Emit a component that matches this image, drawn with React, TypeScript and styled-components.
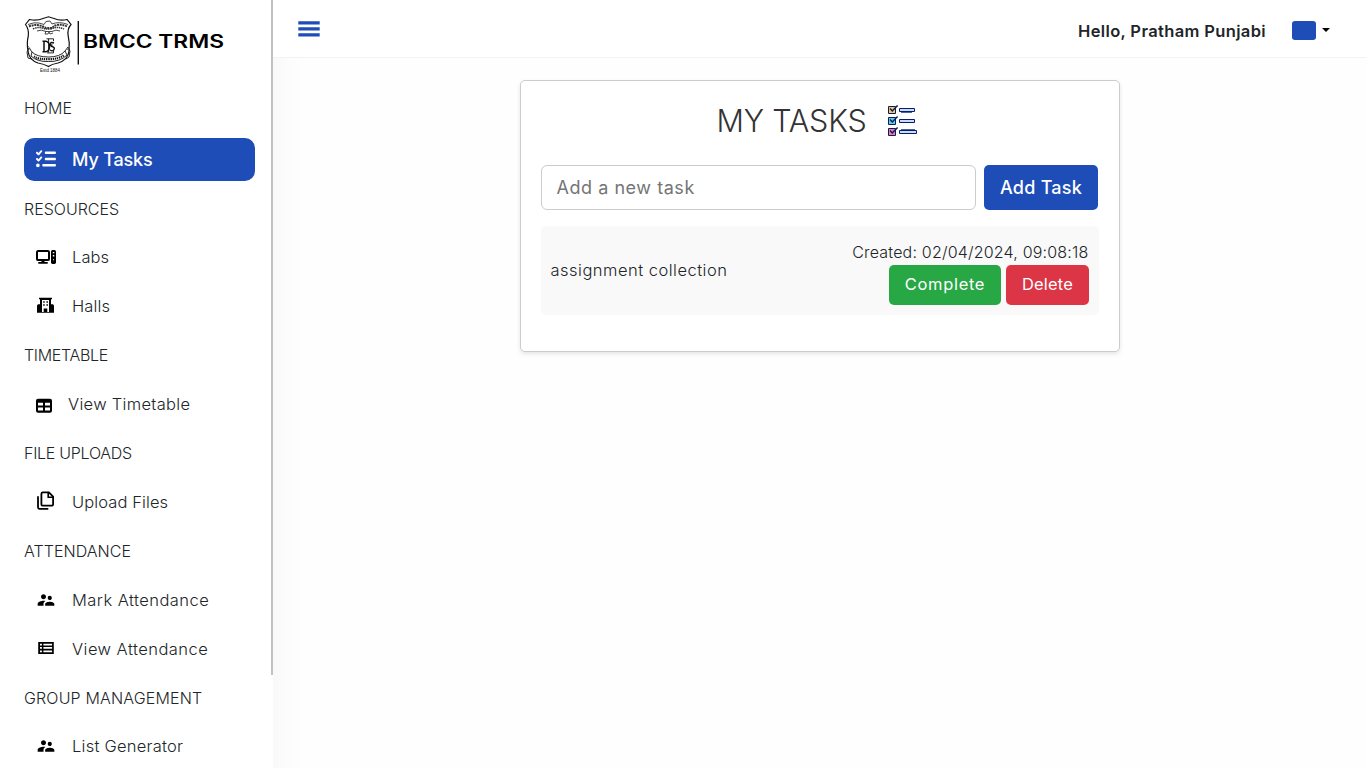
import React from 'react';
import styled, { createGlobalStyle } from 'styled-components';
import { MdSupervisorAccount } from 'react-icons/md';
import { FaListCheck } from 'react-icons/fa6';

const GlobalStyle = createGlobalStyle`
  *, *::before, *::after { box-sizing: border-box; }
  body {
    margin: 0;
    overflow: hidden;
    background: #fefefe;
    color: #212529;
    font: 300 16px/24px Inter, "Liberation Sans", sans-serif;
  }
`;

const BLUE = '#1e4db7';

const Page = styled.div`
  display: flex;
  height: 768px;
`;

const Sidebar = styled.aside`
  display: flex;
  flex: 0 0 273px;
  height: 768px;
  overflow: hidden;
  background: #fff;
`;

const SidebarContent = styled.div`
  flex: 1;
  min-width: 0;
`;

const ScrollThumb = styled.div`
  width: 2px;
  height: 675px;
  background: #c1c1c1;
`;

const Brand = styled.div`
  height: 86px;
  padding: 14px 0 0 22px;
`;

const Nav = styled.nav`
  display: grid;
  grid-auto-rows: 48.92px;
  align-items: center;
`;

const Heading = styled.div<{ $spacing: number; $lift?: number }>`
  padding: 1px 0 ${(p) => p.$lift ?? 0}px 24px;
  letter-spacing: ${(p) => p.$spacing}px;
  white-space: nowrap;
`;

const Item = styled.a<{ $spacing: number; $active?: boolean }>`
  display: flex;
  align-items: center;
  gap: 16px;
  height: 43px;
  margin: 0 16px 0 24px;
  padding-left: 12px;
  border-radius: 10px;
  background: ${(p) => (p.$active ? BLUE : 'transparent')};
  color: ${(p) => (p.$active ? '#fff' : '#212529')};
  font-size: ${(p) => (p.$active ? 18 : 16.5)}px;
  font-weight: ${(p) => (p.$active ? 500 : 300)};
  letter-spacing: ${(p) => p.$spacing}px;
  white-space: nowrap;
`;

const ItemLabel = styled.span`
  padding-top: 0.4px;
`;

const IconSlot = styled.span<{ $active?: boolean }>`
  display: flex;
  color: ${(p) => (p.$active ? '#fff' : '#000')};
  svg { display: block; }
`;

const Main = styled.main`
  display: flex;
  flex: 1;
  flex-direction: column;
  min-width: 0;
`;

const Header = styled.header`
  display: flex;
  align-items: center;
  height: 58px;
  padding: 0 36px 0 25px;
  border-bottom: 1px solid #f3f3f3;
  background: #fff;
`;

const MenuButton = styled.button`
  display: flex;
  margin-right: auto;
  padding: 1px 0 0;
  border: 0;
  background: none;
`;

const Greeting = styled.span`
  margin: 4px 26px 0 0;
  font-size: 16.5px;
  font-weight: 600;
  letter-spacing: 0.36px;
`;

const Avatar = styled.span`
  width: 24px;
  height: 19px;
  margin: 3px 6px 0 0;
  border-radius: 3px;
  background: ${BLUE};
`;

const Caret = styled.span`
  margin-top: 3px;
  border: 4px solid transparent;
  border-top-color: #000;
  border-bottom: 0;
`;

const Content = styled.div`
  display: flex;
  flex: 1;
  align-items: flex-start;
  justify-content: center;
  padding-top: 22px;
  background: linear-gradient(to right, #f9f9f9, #fcfcfc 15px, #fefefe 32px);
`;

const Card = styled.section`
  width: 600px;
  height: 272px;
  padding: 20px;
  border: 1px solid #ccc;
  border-radius: 5px;
  background: #fff;
  box-shadow: 0 2px 4px rgba(0, 0, 0, 0.1);
`;

const Title = styled.h1`
  display: flex;
  align-items: center;
  justify-content: center;
  gap: 21px;
  height: 40px;
  margin: 0 0 24px;
  padding: 0 5px 1px 0;
  color: #333;
  font-size: 30.5px;
  font-weight: 300;
  line-height: 40px;
  letter-spacing: -0.2px;
  white-space: nowrap;
`;

const TitleText = styled.span`
  padding-top: 1px;
`;

const TaskForm = styled.div`
  display: flex;
  gap: 8px;
  height: 45px;
  margin-right: 1px;
`;

const TaskInput = styled.input`
  flex: 1;
  min-width: 0;
  padding: 0 15px;
  border: 1px solid #ccc;
  border-radius: 6px;
  background: #fff;
  font: 400 18px Inter, "Liberation Sans", sans-serif;
  letter-spacing: 0.54px;
  &::placeholder { color: #757575; opacity: 1; }
`;

const Button = styled.button<{ $bg: string; $width: number; $large?: boolean; $spacing: number }>`
  width: ${(p) => p.$width}px;
  height: ${(p) => (p.$large ? 45 : 40)}px;
  padding: 0 0 ${(p) => (p.$large ? 0 : 2)}px 1px;
  border: 0;
  border-radius: 5px;
  background: ${(p) => p.$bg};
  color: #fff;
  font: ${(p) => (p.$large ? '500 18px' : '400 16.5px')} Inter, "Liberation Sans", sans-serif;
  letter-spacing: ${(p) => p.$spacing}px;
  white-space: nowrap;
`;

const TaskRow = styled.div`
  display: flex;
  align-items: center;
  justify-content: space-between;
  height: 89px;
  margin-top: 16px;
  padding: 10px;
  border-radius: 5px;
  background: #f9f9f9;
`;

const TaskName = styled.span`
  padding-bottom: 2px;
  font-size: 16.5px;
  letter-spacing: 0.49px;
`;

const TaskMeta = styled.div`
  display: flex;
  flex-direction: column;
  align-items: flex-end;
  padding-top: 4px;
  letter-spacing: 0.19px;
`;

const Actions = styled.div`
  display: flex;
  gap: 5px;
  margin-top: 1px;
`;

const Crest = () => (
  <svg width="210" height="62" viewBox="22 14 210 62" fill="none" stroke="#111">
    <path d="M25.5 24.5 29.5 19.5Q37 21 43 18.5L48.5 16.8 54 18.5Q60 21 67 19.5L71 24.5Q67 29 68.2 36 70 43 69 51 68 60 58 63 52 64 48.5 66.5 44 64 38 63 29 60 28 51 26.5 43 28.3 36 29 29 25.5 24.5Z" strokeWidth="1.2" />
    <g strokeWidth=".9" stroke="#333">
      <path d="M28 24.5Q34 22 39 23L44 24.5 46 21.5 50 21 52 24Q59 21 68 24.5" />
      <path d="M29 26.5Q36 23.5 43 26.5L46 28 52 28 55 25.5Q61 23.5 67 26.5" strokeWidth="2" strokeDasharray="2 .7" />
      <path d="M33 29Q39 26 45 29L51 29Q57 26 64 29" strokeWidth="1.5" strokeDasharray="1.5 .7" />
      <path d="M37 31Q41 29 46 31.5L52 31.5Q56 29 60 31" />
      <path d="m46 31-1 3h3l1-2 1 2 3-1" />
    </g>
    <g stroke="#111" strokeWidth=".9">
      <path d="M44 41.3v10.4M42.5 41.3h3.5Q49.5 42 49.5 46.5T46 51.7H42.5" strokeWidth="1.5" />
      <path d="M48.6 38.8v13.8M46.5 38.8h7v2.4M48.6 45h4M47 52.9h6.5v-2" />
      <path d="M54 43q-3.5-1.5-3.5 1t2.5 2.8q2.2 1 .8 3t-3.8.2" strokeWidth="1.4" />
    </g>
    <g strokeWidth=".9">
      <path d="M32 52Q37 57 48.5 57 60 57 65 51L67 55Q60 62 48.5 61.5 37 62 31 56Z" fill="#fff" />
      <path d="m32 52-3-4-2 4 1 6 4 1M65 51l3-4 2 4-1 6-3 2" />
      <path d="M34 56.5Q38 59.3 48.5 59.2 59 59.2 64 55" strokeWidth="2.2" strokeDasharray="1.3 .8" />
      <path d="m28 46 3 4M70 46l-3 4" stroke="#666" />
    </g>
    <text x="40" y="71.5" fill="#111" stroke="none" fontFamily="Liberation Sans, sans-serif" fontSize="4.8" textLength="20" lengthAdjust="spacingAndGlyphs">Estd 1884</text>
    <path d="M78.3 21V64.5" strokeWidth="1.4" />
    <text x="83" y="48.4" fill="#000" stroke="none" fontFamily="Inter, sans-serif" fontSize="18" fontWeight="600" textLength="141" lengthAdjust="spacingAndGlyphs">BMCC TRMS</text>
  </svg>
);

const MenuIcon = () => (
  <svg width="22" height="16" viewBox="0 0 22 16" fill={BLUE}>
    <path d="M.3.3h21.4v3.3H.3zM.3 6.3h21.4v3.3H.3zM.3 12.3h21.4v3.3H.3z" />
  </svg>
);

const LabIcon = () => (
  <svg width="20" height="16" viewBox="0 0 20 16">
    <rect x="1" y="1.9" width="12" height="9.2" rx="1.2" fill="none" stroke="#000" strokeWidth="2" />
    <path d="M5.5 11h3v2h3.2v1.8H2.3V13h3.2z" />
    <rect x="15" y=".9" width="5" height="14" rx="1.6" />
    <path d="M16.8 3h1.5v1.3h-1.5zM16.8 6.1h1.5v1.3h-1.5zM17 10.3h1v1h-1z" fill="#fff" />
  </svg>
);

const HallIcon = () => (
  <svg width="20" height="18" viewBox="0 0 20 18">
    <path d="M3 .8h13v1.4h-1v5h2l1 1.2v7.4H1V8.4l1-1.2h2v-5H3z" />
    <path d="M6 3h7v12h-1.7v-3.6H7.7V15H6z" fill="#fff" />
    <path d="M7.2 4.2h1.5v1.5H7.2zM10.4 4.2h1.5v1.5h-1.5zM7.2 7.3h1.5v1.5H7.2zM10.4 7.3h1.5v1.5h-1.5z" />
  </svg>
);

const TimetableIcon = () => (
  <svg width="16" height="20" viewBox="0 0 16 20">
    <rect y="4.8" width="16" height="14" rx="2" />
    <path d="M2 8.8h5v2.8H2zM9 8.8h5v2.8H9zM2 13.6h5v3H2zM9 13.6h5v3H9z" fill="#fff" />
  </svg>
);

const FilesIcon = () => (
  <svg width="20" height="22" viewBox="0 0 20 22" fill="none" stroke="#000" strokeWidth="1.8">
    <path d="M6.9 1.4h6L17.1 5.6v7.6a1.5 1.5 0 0 1-1.5 1.5H6.9a1.5 1.5 0 0 1-1.5-1.5V2.9a1.5 1.5 0 0 1 1.5-1.5z" />
    <path d="M12.2 1.2v5h5" strokeWidth="1.6" />
    <path d="M2 5.2v11.1a1.5 1.5 0 0 0 1.5 1.5h8.8" />
  </svg>
);

const ListIcon = () => (
  <svg width="20" height="14" viewBox="0 0 20 14">
    <path d="M2.2 1h15.6v12H2.2z" />
    <path d="M4 2.7h1.9v1.7H4zM7.4 2.7h8.7v1.7H7.4zM4 6.1h1.9v1.7H4zM7.4 6.1h8.7v1.7H7.4zM4 9.6h1.9v1.7H4zM7.4 9.6h8.7v1.7H7.4z" fill="#fff" />
  </svg>
);

const CHECKS = ['#ffc44d', '#6ecbd0', '#ff7597'];

const ChecklistIcon = () => (
  <svg width="30" height="32" viewBox="0 0 30 32" stroke="#002169">
    {CHECKS.map((color, i) => (
      <g key={color} transform={`translate(0 ${i * 11})`}>
        <path d="M.5 1.5h7v7h-7z" fill={color} />
        <path d="M2 3.6 4.3 6 9.6 .4" fill="none" strokeWidth="1.4" />
        <path d={i === 2 ? 'M11.5 3.5h17v3h-17z' : 'M11.5 3.5h15v3h-15z'} fill="#cfd9fa" />
        {i === 0 && <path d="M13 7.2h11" />}
        {i === 2 && <path d="M13 2.8h14" />}
      </g>
    ))}
  </svg>
);

type Entry = { label: string; spacing: number; icon?: React.ReactNode; active?: boolean; lift?: number };

const ENTRIES: Entry[] = [
  { label: 'HOME', spacing: 0.02, lift: 5 },
  { label: 'My Tasks', spacing: -0.17, icon: <FaListCheck size={20} />, active: true },
  { label: 'RESOURCES', spacing: -0.01 },
  { label: 'Labs', spacing: 0.09, icon: <LabIcon /> },
  { label: 'Halls', spacing: 0.12, icon: <HallIcon /> },
  { label: 'TIMETABLE', spacing: -0.33 },
  { label: 'View Timetable', spacing: 0.3, icon: <TimetableIcon /> },
  { label: 'FILE UPLOADS', spacing: -0.27 },
  { label: 'Upload Files', spacing: 0.1, icon: <FilesIcon /> },
  { label: 'ATTENDANCE', spacing: 0.05 },
  { label: 'Mark Attendance', spacing: 0.46, icon: <MdSupervisorAccount size={20} /> },
  { label: 'View Attendance', spacing: 0.46, icon: <ListIcon /> },
  { label: 'GROUP MANAGEMENT', spacing: 0.16 },
  { label: 'List Generator', spacing: 0.24, icon: <MdSupervisorAccount size={20} /> },
];

export default function App() {
  return (
    <>
      <GlobalStyle />
      <Page>
        <Sidebar>
          <SidebarContent>
            <Brand><Crest /></Brand>
            <Nav>
              {ENTRIES.map((e) =>
                e.icon ? (
                  <Item key={e.label} $spacing={e.spacing} $active={e.active}>
                    <IconSlot $active={e.active}>{e.icon}</IconSlot>
                    <ItemLabel>{e.label}</ItemLabel>
                  </Item>
                ) : (
                  <Heading key={e.label} $spacing={e.spacing} $lift={e.lift}>{e.label}</Heading>
                ),
              )}
            </Nav>
          </SidebarContent>
          <ScrollThumb />
        </Sidebar>
        <Main>
          <Header>
            <MenuButton aria-label="Menu"><MenuIcon /></MenuButton>
            <Greeting>Hello, Pratham Punjabi</Greeting>
            <Avatar />
            <Caret />
          </Header>
          <Content>
            <Card>
              <Title><TitleText>MY TASKS</TitleText><ChecklistIcon /></Title>
              <TaskForm>
                <TaskInput placeholder="Add a new task" />
                <Button $bg={BLUE} $width={114} $large $spacing={0.25}>Add Task</Button>
              </TaskForm>
              <TaskRow>
                <TaskName>assignment collection</TaskName>
                <TaskMeta>
                  <span>Created: 02/04/2024, 09:08:18</span>
                  <Actions>
                    <Button $bg="#28a745" $width={112} $spacing={0.67}>Complete</Button>
                    <Button $bg="#dc3545" $width={83} $spacing={0.2}>Delete</Button>
                  </Actions>
                </TaskMeta>
              </TaskRow>
            </Card>
          </Content>
        </Main>
      </Page>
    </>
  );
}
